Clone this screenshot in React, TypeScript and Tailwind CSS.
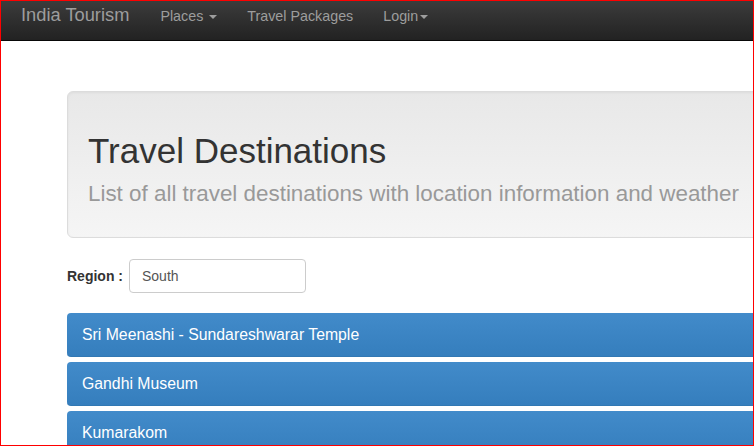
const NAV_LINKS = [
	{ id: "places", label: "Places", caret: true, space: true },
	{ id: "packages", label: "Travel Packages", caret: false, space: false },
	{ id: "login", label: "Login", caret: true, space: false },
];

const DESTINATIONS = ["Sri Meenashi - Sundareshwarar Temple", "Gandhi Museum", "Kumarakom"];

function Caret() {
	return (
		<span className="inline-block w-0 h-0 ml-[2px] align-middle border-t-[4px] border-x-[4px] border-t-[#9d9d9d] border-x-transparent" />
	);
}

function Navbar() {
	return (
		<nav className="h-[40px] flex items-start border-b border-[#080808] bg-linear-to-b from-[#3c3c3c] to-[#222222] text-[#9d9d9d]">
			<a className="ml-[20px] mt-[4px] text-[18.3px] leading-[20px]">India Tourism</a>
			<ul className="flex ml-[16px] mt-[5px]">
				{NAV_LINKS.map(({ id, label, caret, space }) => (
					<li key={id} className="px-[15px] text-[14.3px] leading-[20px]">
						{label}
						{space ? " " : ""}
						{caret && <Caret />}
					</li>
				))}
			</ul>
		</nav>
	);
}

function Jumbotron() {
	return (
		<div className="w-[1100px] h-[147px] px-[20px] pt-[40px] rounded-[6px] border border-[#dcdcdc] bg-linear-to-b from-[#e8e8e8] to-[#f5f5f5] shadow-[inset_0_1px_3px_rgba(0,0,0,0.05)]">
			<h1 className="text-[35px] leading-[38px] text-[#333333]">Travel Destinations</h1>
			<p className="mt-[11px] text-[22.4px] leading-[26px] text-[#999999]">
				List of all travel destinations with location information and weather
			</p>
		</div>
	);
}

export default function App() {
	return (
		<div className="w-[754px] h-[446px] overflow-hidden border border-[#ff0000] bg-white font-['Liberation_Sans',Arial,sans-serif]">
			<Navbar />
			<main className="pl-[66px] pt-[50px]">
				<Jumbotron />
				<div className="mt-[21px] flex items-center gap-[6px]">
					<label className="text-[14px] leading-[20px] font-bold text-[#333333]">Region :</label>
					<input
						defaultValue="South"
						className="w-[177px] h-[34px] px-[12px] rounded-[4px] border border-[#cccccc] text-[14px] text-[#555555] outline-none"
					/>
				</div>
				<div className="mt-[20px] flex flex-col gap-[5px]">
					{DESTINATIONS.map((name) => (
						<div
							key={name}
							className="w-[1100px] h-[44px] flex items-center pl-[15px] rounded-[4px] border-b border-[#3278b3] bg-linear-to-b from-[#428bca] to-[#357ebd] text-white text-[15.8px] leading-[20px]"
						>
							{name}
						</div>
					))}
				</div>
			</main>
		</div>
	);
}
